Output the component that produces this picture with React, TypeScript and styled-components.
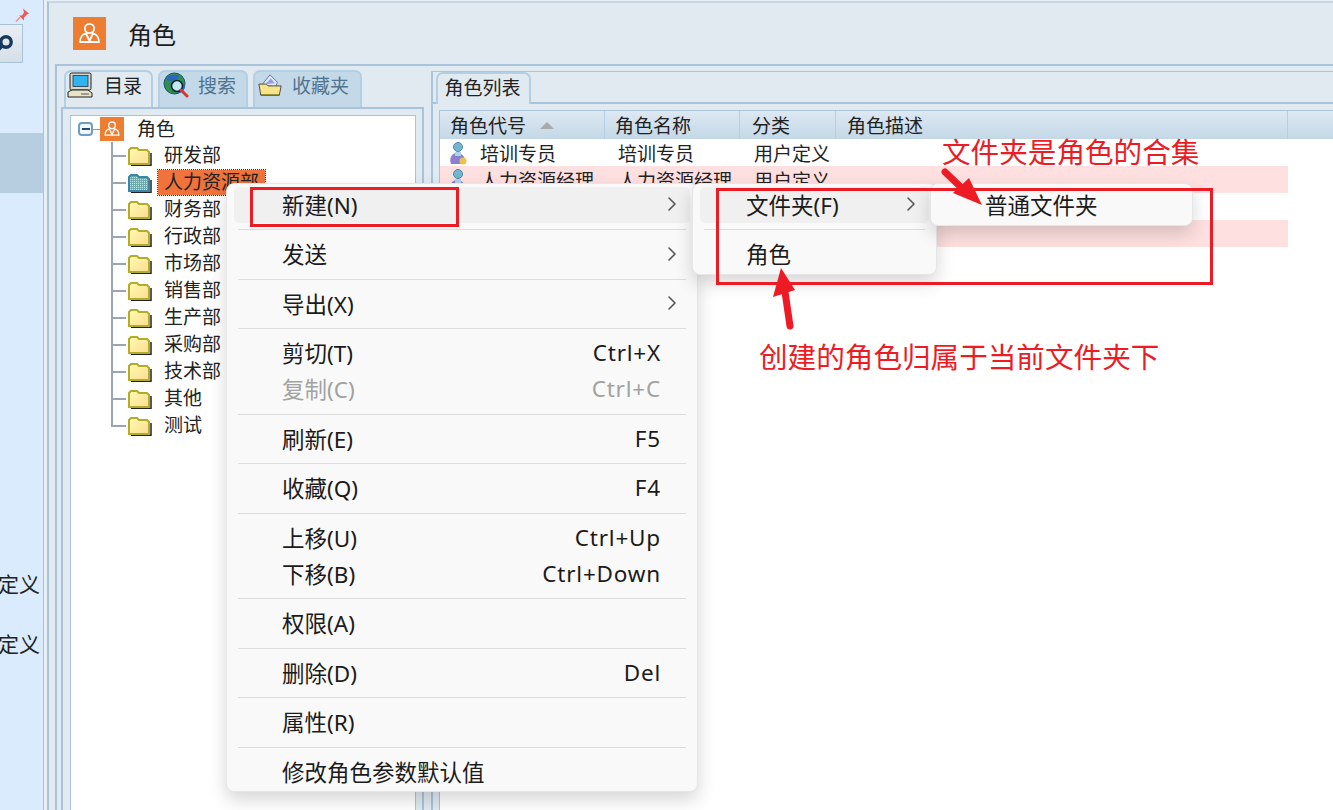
import React, { FC } from 'react';
import styled, { createGlobalStyle } from 'styled-components';
import { ChevronRight } from 'lucide-react';

const GlobalStyle = createGlobalStyle`
  html, body {
    margin: 0;
    padding: 0;
    background: #fff;
    overflow: hidden;
  }
  * {
    box-sizing: border-box;
  }
`;

const FONT = `"Noto Sans", "Noto Sans CJK SC", sans-serif`;
const LINE = '#a9c3da';
const PANEL = '#e1e9f1';
const RED = '#ed1c24';

const Shell = styled.div`
  position: relative;
  display: flex;
  width: 1333px;
  height: 810px;
  overflow: hidden;
  font-family: ${FONT};
  color: #222;
  background: #e6eef6;
`;

/* left strip */
const Strip = styled.div`
  display: flex;
  flex-direction: column;
  width: 44px;
  flex-shrink: 0;
  overflow: hidden;
  background: #d9ebfd;
  border-right: 1px solid ${LINE};
`;
const PinSlot = styled.div`
  height: 24px;
  padding: 6px 0 0 15px;
`;
const ToolButton = styled.div`
  display: flex;
  align-items: center;
  justify-content: flex-end;
  width: 40px;
  height: 39px;
  margin-left: -17px;
  padding-right: 7px;
  border: 1px solid #a8c2d8;
  background: linear-gradient(#e9eef3, #d5dfe8);
`;
const SelectedBand = styled.div`
  height: 60px;
  margin-top: 70px;
  background: #b7cde0;
`;
const StripLabel = styled.div<{ $gap: number }>`
  margin-top: ${(p) => p.$gap}px;
  height: 30px;
  line-height: 30px;
  font-size: 21px;
  white-space: nowrap;
  display: flex;
  justify-content: flex-end;
  padding-right: 3px;
`;

/* window */
const Window = styled.div`
  display: flex;
  flex-direction: column;
  flex: 1;
  min-width: 0;
  margin: 1px 0 0 3px;
  border-left: 2px solid ${LINE};
  border-top: 2px solid #c6d6e4;
  background: ${PANEL};
`;
const Header = styled.div`
  display: flex;
  align-items: center;
  gap: 22px;
  height: 61px;
  padding-left: 24px;
  flex-shrink: 0;
`;
const Title = styled.div`
  font-size: 24px;
  color: #1c1c1c;
`;
const Body = styled.div`
  display: flex;
  flex: 1;
  min-height: 0;
  margin-left: 6px;
  border-top: 2px solid ${LINE};
  border-left: 2px solid ${LINE};
`;

/* left pane */
const LeftPane = styled.div`
  display: flex;
  flex-direction: column;
  width: 374px;
  flex-shrink: 0;
  padding: 0 7px 0 4px;
`;
const TabRow = styled.div`
  display: flex;
  gap: 5px;
  height: 41px;
  padding: 4px 0 0 3px;
  flex-shrink: 0;
`;
const Tab = styled.div<{ $active?: boolean; $width: number }>`
  display: flex;
  align-items: center;
  gap: 9px;
  width: ${(p) => p.$width}px;
  height: 37px;
  padding: 0 0 9px 3px;
  border: 2px solid #b3cfe3;
  border-bottom: none;
  border-radius: 7px 7px 0 0;
  font-size: 19px;
  background: ${(p) => (p.$active ? PANEL : '#c3d9e8')};
  color: ${(p) => (p.$active ? '#222' : '#50748f')};
`;
const TreeFrame = styled.div`
  display: flex;
  flex: 1;
  min-height: 0;
  padding: 6px 6px 0 7px;
  border: 2px solid ${LINE};
  border-bottom: none;
`;
const Tree = styled.div`
  flex: 1;
  background: #fff;
  border: 1px solid ${LINE};
  border-bottom: none;
`;
const RootRow = styled.div`
  display: flex;
  align-items: center;
  height: 26px;
  padding-left: 7px;
  font-size: 19px;
`;
const Expander = styled.span`
  display: flex;
  align-items: center;
  justify-content: center;
  width: 15px;
  height: 14px;
  border: 2px solid #6d9cc4;
  border-radius: 4px;
  background: #f3f8fc;
  &::after {
    content: '';
    width: 8px;
    height: 2px;
    background: #234b75;
  }
`;
const RootLink = styled.span`
  width: 7px;
  height: 1px;
  background: #8d97a5;
`;
const RootLabel = styled.span`
  margin-left: 13px;
  padding-bottom: 3px;
`;
const TreeRow = styled.div`
  display: flex;
  align-items: center;
  height: 27px;
  padding-left: 40px;
  font-size: 19px;
`;
const Elbow = styled.span<{ $last?: boolean }>`
  align-self: stretch;
  width: 15px;
  margin-right: 2px;
  background-image: linear-gradient(#9aa4b2, #9aa4b2), linear-gradient(#9aa4b2, #9aa4b2);
  background-repeat: no-repeat;
  background-size: 2px ${(p) => (p.$last ? '50%' : '100%')}, 100% 2px;
  background-position: 0 0, 0 50%;
`;
const NodeLabel = styled.span<{ $selected?: boolean }>`
  display: flex;
  align-items: center;
  height: 25px;
  margin-left: 6px;
  padding: 0 6px 3px;
  white-space: nowrap;
  background: ${(p) => (p.$selected ? '#f0733c' : 'transparent')};
  outline: ${(p) => (p.$selected ? '1px dotted #333' : 'none')};
`;

/* right pane */
const RightPane = styled.div`
  display: flex;
  flex-direction: column;
  flex: 1;
  min-width: 0;
  padding-top: 5px;
`;
const RightFrame = styled.div`
  display: flex;
  flex-direction: column;
  flex: 1;
  border-top: 1px solid ${LINE};
  border-left: 2px solid ${LINE};
`;
const ListTabRow = styled.div`
  height: 32px;
  padding-left: 3px;
  border-bottom: 2px solid ${LINE};
  flex-shrink: 0;
`;
const ListTab = styled.div`
  display: flex;
  align-items: center;
  justify-content: center;
  width: 95px;
  height: 32px;
  padding: 0 2px 5px 0;
  border: 2px solid #b3cfe3;
  border-bottom: none;
  border-radius: 7px 7px 0 0;
  font-size: 19px;
  background: ${PANEL};
`;
const TableArea = styled.div`
  display: flex;
  flex: 1;
  min-height: 0;
  padding: 6px 0 0 6px;
`;
const Table = styled.div`
  flex: 1;
  background: #fff;
  border-top: 1px solid ${LINE};
  border-left: 1px solid ${LINE};
`;
const COLUMNS = '165px 135px 96px 452px';
const HeadRow = styled.div`
  display: grid;
  grid-template-columns: ${COLUMNS} 1fr;
  height: 28px;
  background: linear-gradient(#dde8f2, #c3d8e7);
`;
const HeadCell = styled.div<{ $indent?: number }>`
  display: flex;
  align-items: center;
  gap: 14px;
  padding-left: ${(p) => p.$indent ?? 10}px;
  font-size: 19px;
  border-right: 1px solid #b2cfe3;
  &:last-child {
    border-right: none;
  }
`;
const SortMark = styled.span`
  width: 0;
  height: 0;
  border-left: 7px solid transparent;
  border-right: 7px solid transparent;
  border-bottom: 7px solid #a9a9a9;
`;
const DataRow = styled.div<{ $pink?: boolean }>`
  display: grid;
  grid-template-columns: ${COLUMNS};
  height: 27px;
  width: 848px;
  background: ${(p) => (p.$pink ? '#ffe0e0' : '#fff')};
  font-size: 19px;
`;
const DataCell = styled.div<{ $indent: number }>`
  display: flex;
  align-items: center;
  gap: 11px;
  padding: 0 0 2px ${(p) => p.$indent}px;
  white-space: nowrap;
`;

/* context menus */
const Menu = styled.div<{ $left: number; $top: number; $width: number; $bottom: number }>`
  position: absolute;
  left: ${(p) => p.$left}px;
  top: ${(p) => p.$top}px;
  width: ${(p) => p.$width}px;
  padding: 3px 7px ${(p) => p.$bottom}px;
  background: #f9f9f9;
  border: 1px solid #e6e6e6;
  border-radius: 8px;
  box-shadow: 0 8px 18px rgba(0, 0, 0, 0.16);
  font-size: 22.5px;
  color: #1b1b1b;
`;
const Item = styled.div<{ $hot?: boolean; $off?: boolean; $indent?: number }>`
  display: flex;
  align-items: center;
  justify-content: space-between;
  height: 36px;
  padding: 0 10px 2px ${(p) => p.$indent ?? 48}px;
  border-radius: 5px;
  white-space: nowrap;
  background: ${(p) => (p.$hot ? '#f0f0f0' : 'transparent')};
  color: ${(p) => (p.$off ? '#a2a2a2' : 'inherit')};
`;
const Shortcut = styled.span`
  padding-right: 19px;
  letter-spacing: 0.8px;
`;
const Chevron = styled(ChevronRight)`
  margin-right: -4px;
  color: #555;
`;
const Sep = styled.div`
  height: 1px;
  margin: 6px 4px 6.5px;
  background: #dcdcdc;
`;

/* annotations on top of the screenshot */
const RedBox = styled.div<{ $left: number; $top: number; $width: number; $height: number }>`
  position: absolute;
  left: ${(p) => p.$left}px;
  top: ${(p) => p.$top}px;
  width: ${(p) => p.$width}px;
  height: ${(p) => p.$height}px;
  border: 3px solid ${RED};
`;
const Note = styled.div<{ $left: number; $top: number }>`
  position: absolute;
  left: ${(p) => p.$left}px;
  top: ${(p) => p.$top}px;
  line-height: 36px;
  font-size: 28.6px;
  color: ${RED};
  white-space: nowrap;
`;
const ArrowSvg = styled.svg`
  position: absolute;
  left: 0;
  top: 0;
  pointer-events: none;
`;

const RoleBadge: FC<{ size: number }> = ({ size }) => (
  <svg width={size} height={size} viewBox="0 0 33 33" style={{ flexShrink: 0 }}>
    <rect width="33" height="33" fill="#ed7d31" />
    <circle cx="16.5" cy="11.5" r="4.6" fill="none" stroke="#fff" strokeWidth="1.8" />
    <path d="M7 25c0-5 3-8 6-8.6l3.5 7.6 3.500-7.600c3 .6 6 3.600 6 8.600z" fill="none" stroke="#fff" strokeWidth="1.800" strokeLinejoin="round" />
  </svg>
);

const MagnifierGlyph = () => (
  <svg width="20" height="20" viewBox="0 0 20 20">
    <circle cx="11" cy="8" r="5.200" fill="none" stroke="#17385c" strokeWidth="3.400" />
    <path d="M7 12l-6 6" stroke="#17385c" strokeWidth="3.500" />
  </svg>
);

const PinGlyph = () => (
  <svg width="14" height="15" viewBox="0 0 14 14">
    <path d="M8 0l6 5-2 1-3 3 0 3-5-5 3 0 2-3z" fill="#ee5a5a" />
    <path d="M5 9L1 13" stroke="#e88" strokeWidth="1.500" />
  </svg>
);

const ComputerIcon = () => (
  <svg width="26" height="26" viewBox="2 0 26 26" style={{ flexShrink: 0, overflow: 'visible' }}>
    <rect x="3" y="1" width="21" height="17" rx="1.500" fill="#d6d8d0" stroke="#222" />
    <rect x="6" y="3.500" width="15" height="11" fill="#2fb4f0" stroke="#234" strokeWidth=".8" />
    <path d="M1 20l4-2h16l4 3v4H1z" fill="#e8e4c8" stroke="#222" />
    <path d="M14 22h8" stroke="#555" />
  </svg>
);

const GlobeIcon = () => (
  <svg width="26" height="26" viewBox="0 0 26 26" style={{ flexShrink: 0 }}>
    <circle cx="11.500" cy="11.500" r="10.500" fill="#2e8f55" stroke="#1c4f6e" />
    <path d="M3 7c4-5 10-5 13-3l-3 4-6 1zM15 19l5-6 2 1c0 4-3 7-7 7z" fill="#2d64c8" />
    <circle cx="14" cy="14" r="5.500" fill="#bfeaf2" stroke="#123" strokeWidth="1.600" />
    <path d="M18 18l6 6" stroke="#d8382c" strokeWidth="3" strokeLinecap="round" />
  </svg>
);

const OpenFolderIcon = () => (
  <svg width="25" height="24" viewBox="0 0 27 24" style={{ flexShrink: 0 }}>
    <path d="M4 12l9-11 8 8-2 5z" fill="#dfe6f7" stroke="#5a6fae" />
    <path d="M8 11l6-6 4 5" fill="#8f9fe0" />
    <path d="M1 11h8l2 2h14l-2 10H3z" fill="#f7e58c" stroke="#444" />
    <path d="M3 23h20" stroke="#7a7400" strokeWidth="1.600" />
  </svg>
);

const FolderIcon: FC<{ selected?: boolean }> = ({ selected }) => (
  <svg width="24" height="20" viewBox="0 0 24 20" style={{ flexShrink: 0 }}>
    <defs>
      <linearGradient id="folderFill" x1="0" y1="0" x2="1" y2="1">
        <stop offset="0" stopColor="#fffbb0" />
        <stop offset="1" stopColor="#fbdc90" />
      </linearGradient>
      <pattern id="folderDither" width="2" height="2" patternUnits="userSpaceOnUse">
        <rect width="2" height="2" fill="#6fa8a8" />
        <rect width="1" height="1" fill="#cfe3df" />
      </pattern>
    </defs>
    <path d="M3 19.500h20V7" fill="none" stroke="#222" strokeWidth="1.500" />
    <path
      d="M1 18V4l2-2h6l2 2h8l2 2v12z"
      fill={selected ? 'url(#folderDither)' : 'url(#folderFill)'}
      stroke={selected ? '#3b86a8' : '#b3ac2a'}
      strokeWidth="2"
    />
  </svg>
);

const UserIcon = () => (
  <svg width="20" height="25" viewBox="0 0 20 25" style={{ flexShrink: 0 }}>
    <path d="M2 23c-2-5 0-11 6-11s9 5 8 11z" fill="#8d7fd0" />
    <circle cx="9" cy="6" r="4.500" fill="#74b6d2" stroke="#4d86a8" />
    <path d="M6 11h6v4H6z" fill="#a9d5e6" />
    <circle cx="14" cy="20" r="3.500" fill="#ecc24a" />
  </svg>
);

const folders = ['研发部', '人力资源部', '财务部', '行政部', '市场部', '销售部', '生产部', '采购部', '技术部', '其他', '测试'];
const rows = [
  { code: '培训专员', name: '培训专员', kind: '用户定义' },
  { code: '人力资源经理', name: '人力资源经理', kind: '用户定义', pink: true },
  { code: '', name: '', kind: '' },
  { code: '', name: '', kind: '', pink: true },
];

type MenuEntry = { label: string; shortcut?: string; sub?: boolean; hot?: boolean; off?: boolean } | 'sep';
const mainMenu: MenuEntry[] = [
  { label: '新建(N)', sub: true, hot: true },
  'sep',
  { label: '发送', sub: true },
  'sep',
  { label: '导出(X)', sub: true },
  'sep',
  { label: '剪切(T)', shortcut: 'Ctrl+X' },
  { label: '复制(C)', shortcut: 'Ctrl+C', off: true },
  'sep',
  { label: '刷新(E)', shortcut: 'F5' },
  'sep',
  { label: '收藏(Q)', shortcut: 'F4' },
  'sep',
  { label: '上移(U)', shortcut: 'Ctrl+Up' },
  { label: '下移(B)', shortcut: 'Ctrl+Down' },
  'sep',
  { label: '权限(A)' },
  'sep',
  { label: '删除(D)', shortcut: 'Del' },
  'sep',
  { label: '属性(R)' },
  'sep',
  { label: '修改角色参数默认值' },
];

const App: FC = () => {
  return (
    <Shell>
      <GlobalStyle />
      <Strip>
        <PinSlot>
          <PinGlyph />
        </PinSlot>
        <ToolButton>
          <MagnifierGlyph />
        </ToolButton>
        <SelectedBand />
        <StripLabel $gap={376}>用户定义</StripLabel>
        <StripLabel $gap={30}>用户定义</StripLabel>
      </Strip>

      <Window>
        <Header>
          <RoleBadge size={33} />
          <Title>角色</Title>
        </Header>
        <Body>
          <LeftPane>
            <TabRow>
              <Tab $active $width={89}>
                <ComputerIcon />
                目录
              </Tab>
              <Tab $width={90}>
                <GlobeIcon />
                搜索
              </Tab>
              <Tab $width={109}>
                <OpenFolderIcon />
                收藏夹
              </Tab>
            </TabRow>
            <TreeFrame>
              <Tree>
                <RootRow>
                  <Expander />
                  <RootLink />
                  <RoleBadge size={24} />
                  <RootLabel>角色</RootLabel>
                </RootRow>
                {folders.map((name, i) => (
                  <TreeRow key={name}>
                    <Elbow $last={i === folders.length - 1} />
                    <FolderIcon selected={i === 1} />
                    <NodeLabel $selected={i === 1}>{name}</NodeLabel>
                  </TreeRow>
                ))}
              </Tree>
            </TreeFrame>
          </LeftPane>

          <RightPane>
            <RightFrame>
              <ListTabRow>
                <ListTab>角色列表</ListTab>
              </ListTabRow>
              <TableArea>
                <Table>
                  <HeadRow>
                    <HeadCell>
                      角色代号
                      <SortMark />
                    </HeadCell>
                    <HeadCell>角色名称</HeadCell>
                    <HeadCell $indent={12}>分类</HeadCell>
                    <HeadCell $indent={11}>角色描述</HeadCell>
                    <HeadCell />
                  </HeadRow>
                  {rows.map((row, i) => (
                    <DataRow key={i} $pink={row.pink}>
                      <DataCell $indent={9}>
                        {row.code && <UserIcon />}
                        {row.code}
                      </DataCell>
                      <DataCell $indent={13}>{row.name}</DataCell>
                      <DataCell $indent={14}>{row.kind}</DataCell>
                      <DataCell $indent={10} />
                    </DataRow>
                  ))}
                </Table>
              </TableArea>
            </RightFrame>
          </RightPane>
        </Body>
      </Window>

      <Menu $left={226} $top={183} $width={472} $bottom={1}>
        {mainMenu.map((entry, i) =>
          entry === 'sep' ? (
            <Sep key={i} />
          ) : (
            <Item key={i} $hot={entry.hot} $off={entry.off}>
              {entry.label}
              {entry.sub && <Chevron size={24} strokeWidth={1.6} />}
              {entry.shortcut && <Shortcut>{entry.shortcut}</Shortcut>}
            </Item>
          ),
        )}
      </Menu>

      <Menu $left={692} $top={183} $width={245} $bottom={1}>
        <Item $hot $indent={46}>
          文件夹(F)
          <Chevron size={24} strokeWidth={1.6} />
        </Item>
        <Sep />
        <Item $indent={46}>角色</Item>
      </Menu>

      <Menu $left={930} $top={183} $width={263} $bottom={2}>
        <Item $indent={47}>普通文件夹</Item>
      </Menu>

      <RedBox $left={250} $top={187} $width={209} $height={40} />
      <RedBox $left={716} $top={188} $width={497} $height={97} />
      <Note $left={942} $top={134}>文件夹是角色的合集</Note>
      <Note $left={759} $top={339}>创建的角色归属于当前文件夹下</Note>

      <ArrowSvg width="1333" height="810" viewBox="0 0 1333 810">
        <path d="M945 172L966 192" stroke={RED} strokeWidth="7" strokeLinecap="round" />
        <path d="M982 205L969 178L953 193z" fill={RED} />
        <path d="M790 326L784 285" stroke={RED} strokeWidth="7" strokeLinecap="round" />
        <path d="M781 268L795 290L773 297z" fill={RED} />
      </ArrowSvg>
    </Shell>
  );
};

export default App;
